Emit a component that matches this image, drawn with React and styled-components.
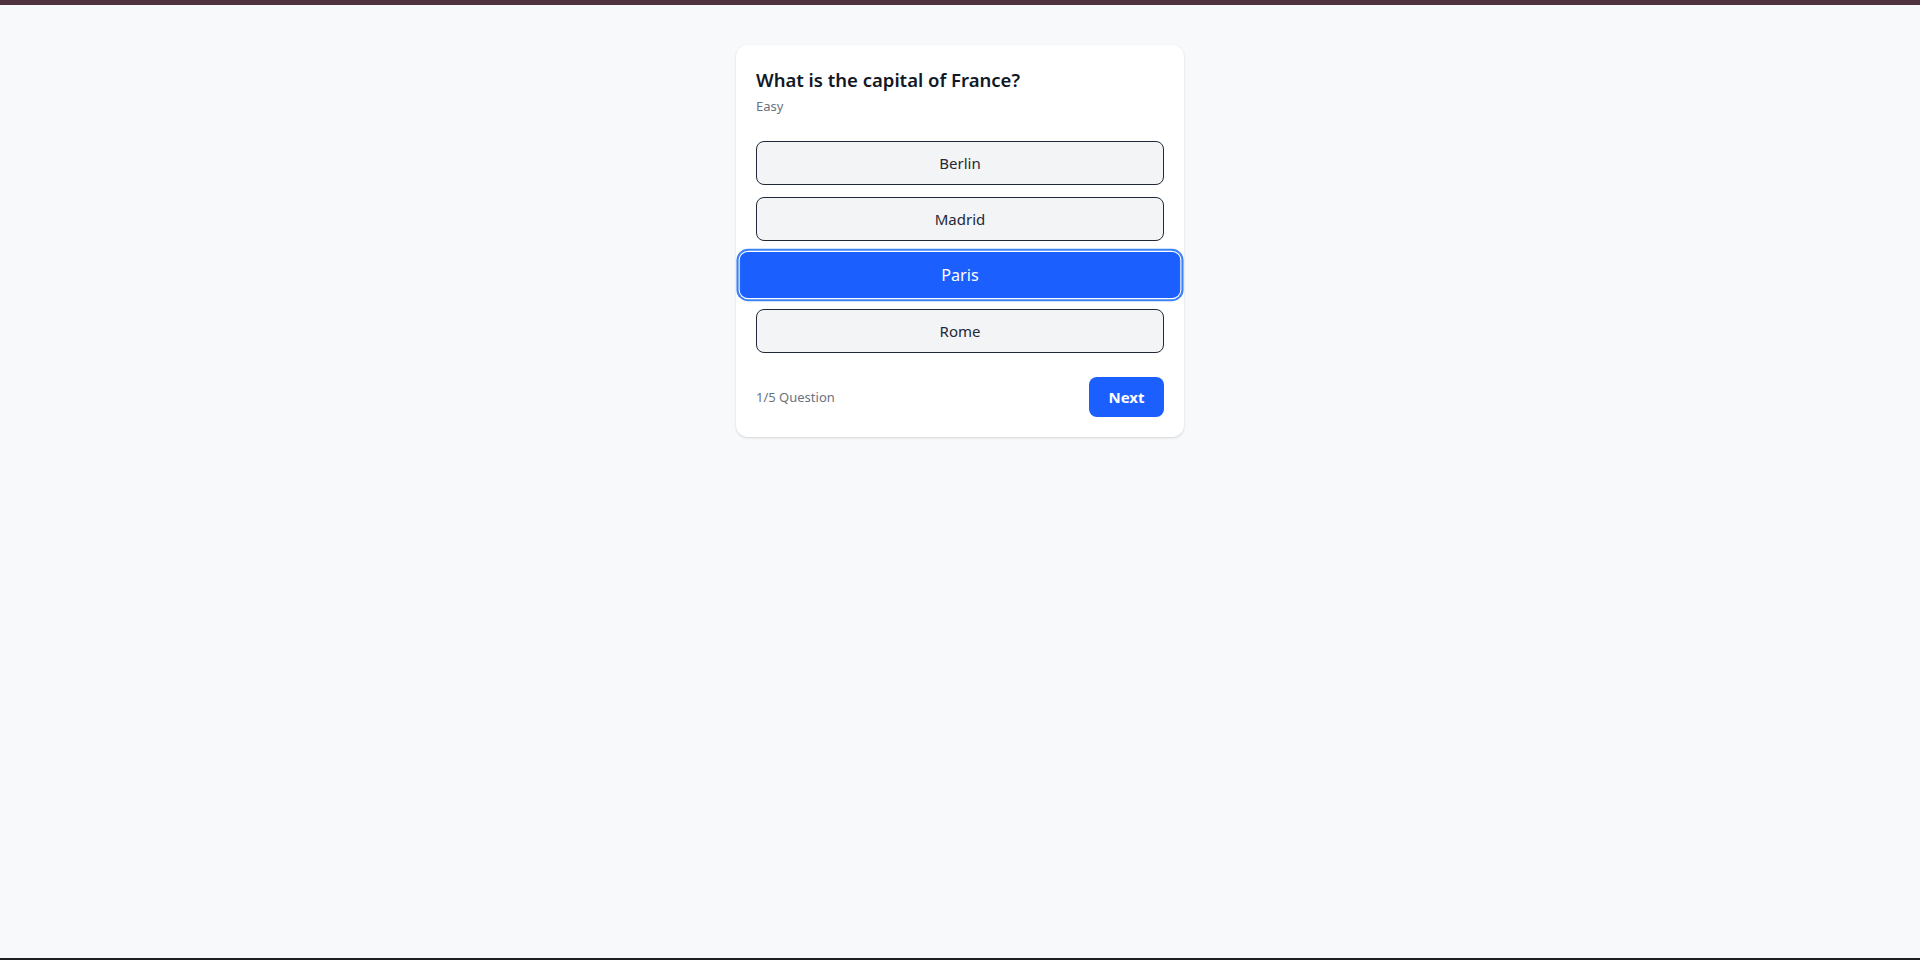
import React, { useState } from 'react';
import styled, { createGlobalStyle } from 'styled-components';

const GlobalStyle = createGlobalStyle`
  html, body {
    margin: 0;
    padding: 0;
    background: #f8f9fb;
    font-family: "Noto Sans", "Open Sans", sans-serif;
  }
`;

const options = ['Berlin', 'Madrid', 'Paris', 'Rome'];

const Page = styled.div`
  min-height: 960px;
  display: flex;
  flex-direction: column;
`;

const TopBar = styled.div`
  height: 5px;
  background: #4f3440;
`;

const Main = styled.main`
  flex: 1;
  display: flex;
  justify-content: center;
  align-items: flex-start;
  padding-top: 40px;
`;

const BottomBar = styled.div`
  height: 2px;
  background: #202020;
`;

const Card = styled.div`
  width: 448px;
  box-sizing: border-box;
  padding: 21px 20px 20px;
  background: #fff;
  border-radius: 12px;
  box-shadow: 0 1px 3px rgba(0, 0, 0, 0.1), 0 1px 2px rgba(0, 0, 0, 0.06);
`;

const Title = styled.h2`
  margin: 0;
  font-size: 18.5px;
  line-height: 28px;
  font-weight: 600;
  color: #111827;
`;

const Level = styled.div`
  margin-top: 2px;
  font-size: 13px;
  line-height: 20px;
  color: #6b7280;
`;

const OptionList = styled.div`
  margin-top: 25px;
  display: flex;
  flex-direction: column;
  gap: 12px;
`;

const Option = styled.button`
  height: 44px;
  width: 100%;
  border-radius: 8px;
  font-family: inherit;
  font-size: 15px;
  cursor: pointer;
  border: 1px solid ${p => (p.selected ? '#1b5fff' : '#1f2937')};
  background: ${p => (p.selected ? '#1b5fff' : '#f3f4f6')};
  color: ${p => (p.selected ? '#fff' : '#1f2937')};
  transform: ${p => (p.selected ? 'scale(1.08, 1.05)' : 'none')};
  box-shadow: ${p => (p.selected ? '0 0 0 1px #fff, 0 0 0 3px #3b82f6' : 'none')};
`;

const Footer = styled.div`
  margin-top: 24px;
  display: flex;
  justify-content: space-between;
  align-items: center;
`;

const Counter = styled.span`
  font-size: 13px;
  color: #6b7280;
`;

const NextButton = styled.button`
  width: 75px;
  height: 40px;
  border: none;
  border-radius: 8px;
  background: #1b5fff;
  color: #fff;
  font-family: inherit;
  font-size: 15px;
  font-weight: 700;
  cursor: pointer;
`;

const App = () => {
  const [selected, setSelected] = useState('Paris');

  return (
    <Page>
      <GlobalStyle />
      <TopBar />
      <Main>
        <Card>
          <Title>What is the capital of France?</Title>
          <Level>Easy</Level>
          <OptionList>
            {options.map(opt => (
              <Option key={opt} selected={opt === selected} onClick={() => setSelected(opt)}>
                {opt}
              </Option>
            ))}
          </OptionList>
          <Footer>
            <Counter>1/5 Question</Counter>
            <NextButton>Next</NextButton>
          </Footer>
        </Card>
      </Main>
      <BottomBar />
    </Page>
  );
};

export default App;
